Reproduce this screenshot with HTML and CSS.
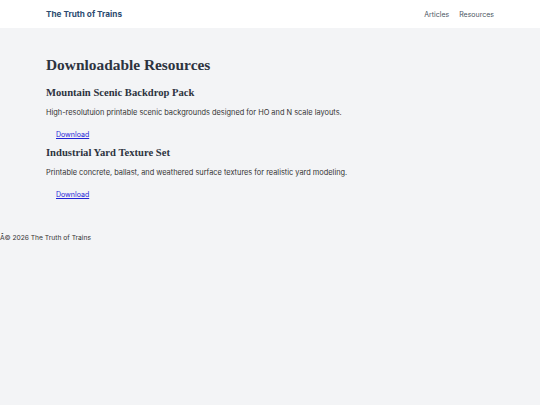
FILE: index.html
```html
<!DOCTYPE html>
<html>
<head>
<meta charset="utf-8">
<link rel="stylesheet" href="styles.css">
</head>
<body>
<header class="site-header">
  <a class="brand" href="#">The Truth of Trains</a>
  <nav class="nav">
    <a href="#">Articles</a>
    <a href="#">Resources</a>
  </nav>
</header>
<main class="main">
  <h1 class="title">Downloadable Resources</h1>
  <section class="resource">
    <h3>Mountain Scenic Backdrop Pack</h3>
    <p>High-resolutuion printable scenic backgrounds designed for HO and N scale layouts.</p>
    <a class="dl" href="#">Download</a>
  </section>
  <section class="resource">
    <h3>Industrial Yard Texture Set</h3>
    <p>Printable concrete, ballast, and weathered surface textures for realistic yard modeling.</p>
    <a class="dl" href="#">Download</a>
  </section>
</main>
<footer class="footer">Â© 2026 The Truth of Trains</footer>
</body>
</html>
```
FILE: styles.css
```css
html, body { margin: 0; padding: 0; }
body {
  background: #f3f4f6;
  font-family: Inter, "Noto Sans", sans-serif;
  color: #1f2937;
  font-size: 7px;
  line-height: 11px;
}
.site-header {
  background: #ffffff;
  height: 28px;
  padding: 0 46px;
  display: flex;
  align-items: center;
  justify-content: space-between;
}
.brand {
  font-weight: 700;
  font-size: 8.2px;
  color: #2c4b70;
  text-decoration: none;
}
.nav { display: flex; gap: 10px; }
.nav a {
  color: #4b5563;
  text-decoration: none;
  font-size: 7px;
}
.main { padding: 27px 46px 0; }
.title {
  font-family: "Liberation Serif", serif;
  font-size: 15.4px;
  line-height: 20px;
  font-weight: 700;
  color: #2d3340;
  margin: 0 0 11.5px;
}
.resource h3 {
  font-family: "Liberation Serif", serif;
  font-size: 10.6px;
  line-height: 12px;
  font-weight: 700;
  color: #2d3340;
  margin: 0 0 8px;
}
.resource p {
  margin: 0 0 11.5px;
  font-size: 7.4px;
  color: #333333;
}
.dl {
  display: block;
  width: max-content;
  margin: 0 0 6.5px 10px;
  color: #2323d6;
  text-decoration: underline;
}
.footer {
  margin-top: 33px;
  font-size: 6.7px;
  color: #333333;
}
```
